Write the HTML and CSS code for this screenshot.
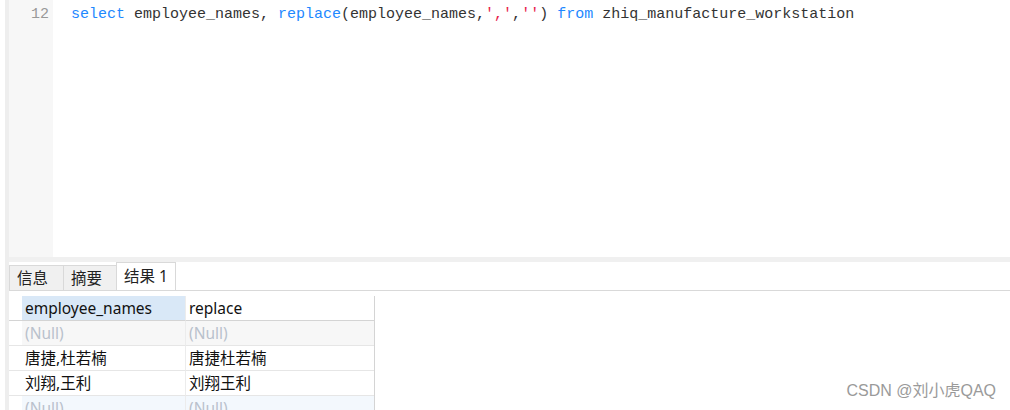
FILE: index.html
```html
<!DOCTYPE html>
<html lang="zh">
<head>
    <meta charset="UTF-8">
    <title>查询结果</title>
    <link rel="stylesheet" href="styles.css">
</head>
<body>
    <div class="app">
        <div class="main">
            <div class="editor">
                <div class="gutter">12</div>
                <div class="code"><span class="kw">select</span> employee_names, <span class="kw">replace</span>(employee_names,<span class="str">','</span>,<span class="str">''</span>) <span class="kw">from</span> zhiq_manufacture_workstation</div>
            </div>
            <div class="splitter"></div>
            <div class="tabs">
                <div class="tab">信息</div>
                <div class="tab">摘要</div>
                <div class="tab active">结果 1</div>
            </div>
            <div class="results">
                <div class="grid">
                    <div class="rh head"></div>
                    <div class="cell head sel">employee_names</div>
                    <div class="cell head">replace</div>

                    <div class="rh"></div>
                    <div class="cell null shade">(Null)</div>
                    <div class="cell null shade">(Null)</div>

                    <div class="rh"></div>
                    <div class="cell">唐捷,杜若楠</div>
                    <div class="cell">唐捷杜若楠</div>

                    <div class="rh"></div>
                    <div class="cell">刘翔,王利</div>
                    <div class="cell">刘翔王利</div>

                    <div class="rh"></div>
                    <div class="cell null tint">(Null)</div>
                    <div class="cell null tint">(Null)</div>
                </div>
            </div>
        </div>
        <div class="watermark">CSDN @刘小虎QAQ</div>
    </div>
</body>
</html>
```

FILE: styles.css
```css
* {
    margin: 0;
    padding: 0;
    box-sizing: border-box;
}

body {
    width: 1010px;
    height: 410px;
    overflow: hidden;
    background: #fff;
    font-family: "Noto Sans", "Noto Sans CJK SC", sans-serif;
}

.app {
    position: relative;
    height: 410px;
    padding-left: 5px;
}

.main {
    height: 100%;
    display: flex;
    flex-direction: column;
    border-left: 4px solid #eeeeee;
}

.main > * {
    flex-shrink: 0;
}

.editor {
    height: 257px;
    display: flex;
}

.gutter {
    width: 44px;
    padding-top: 3px;
    padding-right: 4px;
    background: #f7f7f7;
    color: #999;
    font-family: "Liberation Mono", monospace;
    font-size: 15px;
    line-height: 24px;
    text-align: right;
}

.code {
    padding-top: 3px;
    padding-left: 18px;
    font-family: "Liberation Mono", monospace;
    font-size: 15px;
    line-height: 24px;
    color: #333;
    white-space: pre;
}

.kw {
    color: #1e88ff;
}

.str {
    color: #e8234a;
}

.splitter {
    height: 5px;
    background: #f0f0f0;
}

.tabs {
    height: 29px;
    display: flex;
    align-items: flex-end;
    border-bottom: 1px solid #d9d9d9;
}

.tab {
    height: 25px;
    padding: 0 7px;
    min-width: 54px;
    background: #f0f0f0;
    border: 1px solid #d9d9d9;
    border-bottom: none;
    border-right: none;
    font-size: 15.5px;
    line-height: 25px;
    color: #222;
}

.tab + .tab {
    min-width: 53px;
}

.tab.active {
    height: 28px;
    min-width: 58px;
    background: #fff;
    border-right: 1px solid #d9d9d9;
    line-height: 27px;
}

.results {
    padding-top: 5px;
}

.grid {
    display: grid;
    grid-template-columns: 13px 164px 188px;
    grid-auto-rows: 25px;
    width: 366px;
    border-right: 1px solid #d4d4d4;
}

.rh {
    border-bottom: 1px solid #e6e6e6;
}

.cell {
    padding-left: 3px;
    font-size: 15.5px;
    line-height: 25px;
    color: #111;
    white-space: nowrap;
    border-bottom: 1px solid #e6e6e6;
    border-right: 1px solid #ececec;
}

.cell:nth-child(3n) {
    border-right: none;
}

.head {
    border-bottom: 1px solid #d4d4d4;
}

.cell.sel {
    background: #d9e8f7;
}

.null {
    color: #b9c1cc;
}

.shade {
    background: #f7f7f7;
}

.tint {
    background: #f3f8fd;
}

.watermark {
    position: absolute;
    right: 14px;
    bottom: 9px;
    font-family: "Liberation Sans", "Noto Sans CJK SC", sans-serif;
    font-size: 16px;
    color: #9a9a9a;
    text-shadow: 0 0 1px #fff;
}
```
